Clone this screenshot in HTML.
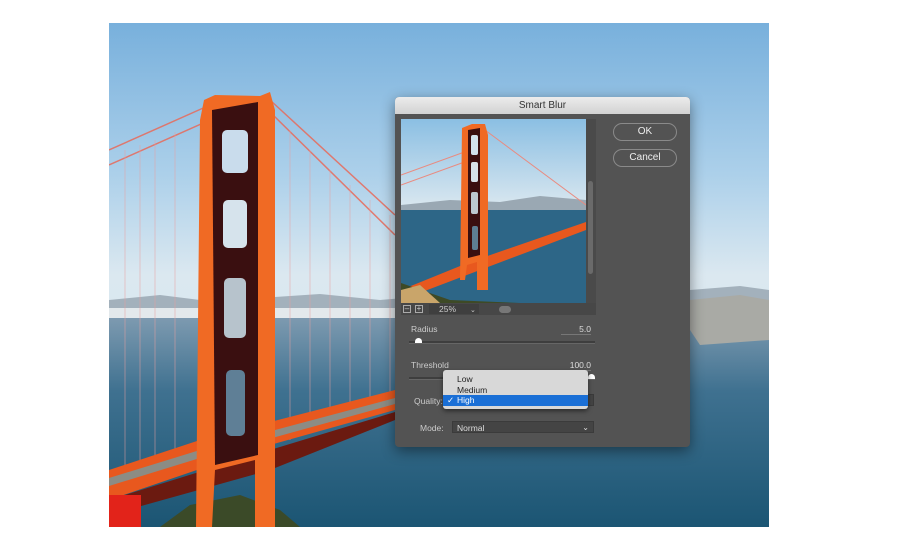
<!DOCTYPE html>
<html><head><meta charset="utf-8"><style>
body{margin:0;width:900px;height:554px;background:#fff;position:relative;overflow:hidden;font-family:"Liberation Sans",sans-serif}
.abs{position:absolute}
.dlg{left:395px;top:97px;width:295px;height:350px;background:#535353;border-radius:4px;box-shadow:0 4px 14px rgba(0,0,0,.45);overflow:hidden}
.title{left:0;top:0;width:295px;height:17px;background:linear-gradient(#ececec,#d2d2d2);text-align:center;font-size:10px;line-height:17px;color:#333}
.btn{width:62px;height:16px;border:1px solid #8a8a8a;border-radius:9px;color:#eee;font-size:10px;text-align:center;line-height:16px;background:#535353}
.lbl{color:#ccc;font-size:8.5px}
.val{color:#ddd;font-size:8.5px;border-bottom:1px solid #777;width:30px;text-align:right}
.track{height:2px;background:#3e3e3e;border-bottom:1px solid #666}
.sel{background:#444;border:1px solid #3b3b3b;height:12px;color:#ddd;font-size:8.5px;line-height:12px;padding-left:4px;box-sizing:border-box}
</style></head><body>
<svg class="abs" style="left:109px;top:23px" width="660" height="504" viewBox="109 23 660 504">
<defs>
<linearGradient id="sky" x1="0" y1="0" x2="0" y2="1"><stop offset="0" stop-color="#78b0dc"/><stop offset=".3" stop-color="#acd0ea"/><stop offset=".5" stop-color="#dbe8f0"/><stop offset="1" stop-color="#d3e2ea"/></linearGradient>
<linearGradient id="wat" x1="0" y1="0" x2="0" y2="1"><stop offset="0" stop-color="#7d9ab0"/><stop offset=".35" stop-color="#3f7190"/><stop offset="1" stop-color="#1b5573"/></linearGradient>
</defs>
<rect x="109" y="23" width="660" height="504" fill="url(#sky)"/>
<path d="M109 300 L160 295 L200 300 L260 298 L320 294 L380 300 L430 296 L520 300 L600 295 L690 290 L740 286 L769 290 L769 318 L109 318Z" fill="#a3b1bc"/>
<rect x="109" y="308" width="660" height="10" fill="#e3e9ec"/>
<rect x="109" y="318" width="660" height="209" fill="url(#wat)"/>
<path d="M690 300 L740 295 L769 300 L769 340 L700 345 L690 330Z" fill="#a9aaa5"/>
<g stroke="#e86a5a" stroke-width="1.5" fill="none" opacity=".85">
<path d="M109 150 L210 105"/><path d="M109 165 L210 120"/><path d="M270 100 L395 215"/><path d="M270 112 L395 235"/>
</g>
<g stroke="#e9a0a0" stroke-width="1" opacity=".5">
<path d="M125 150V470M140 145V465M155 140V460M175 132V455M290 130V440M310 150V430M330 170V425M350 185V418M370 200V410M390 215V400"/>
</g>
<path d="M109 470 L200 440 L395 390 L395 410 L270 445 L109 500Z" fill="#e8581e"/>
<path d="M109 478 L200 450 L395 398 L395 404 L200 458 L109 486Z" fill="#8c8c84"/>
<path d="M109 500 L270 450 L395 412 L395 420 L270 470 L109 515Z" fill="#6b1a10"/>
<rect x="109" y="495" width="32" height="32" fill="#e2231a"/>
<path d="M160 527 L190 505 L240 495 L280 510 L300 527Z" fill="#3b4a28"/>
<path d="M204 100 L215 95 L260 96 L270 92 L275 110 L275 527 L255 527 L255 460 L215 470 L212 527 L196 527 L200 120Z" fill="#f06a24"/>
<path d="M212 110 L258 102 L258 455 L215 465Z" fill="#3a0f10"/>
<rect x="222" y="130" width="26" height="43" rx="5" fill="#c9dcec"/>
<rect x="223" y="200" width="24" height="48" rx="5" fill="#d6e3ec"/>
<rect x="224" y="278" width="22" height="60" rx="5" fill="#b7c3cc"/>
<rect x="226" y="370" width="19" height="66" rx="5" fill="#5f7f96"/>
</svg>
<div class="abs dlg">
<div class="abs title">Smart Blur</div>
<svg class="abs" style="left:6px;top:22px" width="185" height="184" viewBox="401 119 185 184">
<defs><linearGradient id="s2" x1="0" y1="0" x2="0" y2="1"><stop offset="0" stop-color="#8bbfe3"/><stop offset=".5" stop-color="#dde9f0"/><stop offset="1" stop-color="#c9d8e2"/></linearGradient></defs>
<rect x="401" y="119" width="185" height="184" fill="url(#s2)"/>
<path d="M401 205 L450 200 L500 202 L540 196 L586 200 L586 212 L401 212Z" fill="#9aa8b3"/>
<rect x="401" y="210" width="185" height="93" fill="#2d6687"/>
<path d="M401 175 L470 150 M401 185 L470 160 M485 130 L586 205" stroke="#e98b80" stroke-width="1"/>
<path d="M401 290 L470 262 L586 222 L586 230 L480 270 L401 300Z" fill="#e8581e"/>
<path d="M401 283 L450 300 L520 303 L401 303Z" fill="#3e4a26"/>
<path d="M401 290 L420 285 L440 303 L401 303Z" fill="#c9a56a"/>
<path d="M462 128 L472 124 L485 124 L488 135 L488 290 L477 290 L477 262 L467 265 L465 280 L460 280Z" fill="#f06a24"/>
<path d="M468 130 L480 128 L480 255 L468 258Z" fill="#3a0f10"/>
<rect x="471" y="135" width="7" height="20" rx="2" fill="#d2e2ee"/><rect x="471" y="162" width="7" height="20" rx="2" fill="#d6e2ea"/><rect x="471" y="192" width="7" height="22" rx="2" fill="#bcc8d0"/><rect x="472" y="226" width="6" height="24" rx="2" fill="#5e7e93"/>
</svg>
<div class="abs" style="left:191px;top:22px;width:10px;height:196px;background:#4a4a4a"></div>
<div class="abs" style="left:193px;top:84px;width:5px;height:93px;background:#6a6a6a;border-radius:3px"></div>
<div class="abs" style="left:6px;top:206px;width:195px;height:12px;background:#474747"></div>
<div class="abs" style="left:8px;top:208px;width:8px;height:8px;border:1px solid #aaa;box-sizing:border-box;color:#ccc;font-size:8px;line-height:6px;text-align:center">–</div>
<div class="abs" style="left:20px;top:208px;width:8px;height:8px;border:1px solid #aaa;box-sizing:border-box;color:#ccc;font-size:8px;line-height:6px;text-align:center">+</div>
<div class="abs" style="left:34px;top:207px;width:50px;height:10px;background:#3f3f3f;color:#ccc;font-size:8.5px;line-height:10px;padding-left:10px;box-sizing:border-box">25%<span style="margin-left:14px;font-size:7px">⌄</span></div>
<div class="abs" style="left:104px;top:209px;width:12px;height:7px;background:#777;border-radius:4px"></div>
<div class="abs btn" style="left:218px;top:26px">OK</div>
<div class="abs btn" style="left:218px;top:52px">Cancel</div>
<div class="abs lbl" style="left:16px;top:227px">Radius</div>
<div class="abs val" style="left:166px;top:227px">5.0</div>
<div class="abs track" style="left:14px;top:244px;width:186px"></div>
<div class="abs" style="left:20px;top:241px;width:7px;height:5px;background:#fff;border-radius:4px 4px 0 0"></div>
<div class="abs lbl" style="left:16px;top:263px">Threshold</div>
<div class="abs val" style="left:166px;top:263px">100.0</div>
<div class="abs track" style="left:14px;top:280px;width:186px"></div>
<div class="abs" style="left:193px;top:277px;width:7px;height:5px;background:#fff;border-radius:4px 4px 0 0"></div>
<div class="abs lbl" style="left:19px;top:299px">Quality:</div>
<div class="abs sel" style="left:56px;top:297px;width:143px"></div>
<div class="abs lbl" style="left:25px;top:326px">Mode:</div>
<div class="abs sel" style="left:57px;top:324px;width:142px">Normal<span style="float:right;margin-right:4px;font-size:8px">⌄</span></div>
<div class="abs" style="left:48px;top:273px;width:145px;height:39px;background:#d8d8d8;border-radius:3px;box-shadow:0 2px 5px rgba(0,0,0,.5);font-size:8.5px;color:#222">
<div style="position:absolute;left:14px;top:4px">Low</div>
<div style="position:absolute;left:14px;top:15px">Medium</div>
<div style="position:absolute;left:0;top:25px;width:145px;height:11px;background:#1a6fd6;color:#fff;line-height:11px"><span style="margin-left:4px">✓</span> <span style="position:absolute;left:14px">High</span></div>
</div>
</div>
</body></html>
